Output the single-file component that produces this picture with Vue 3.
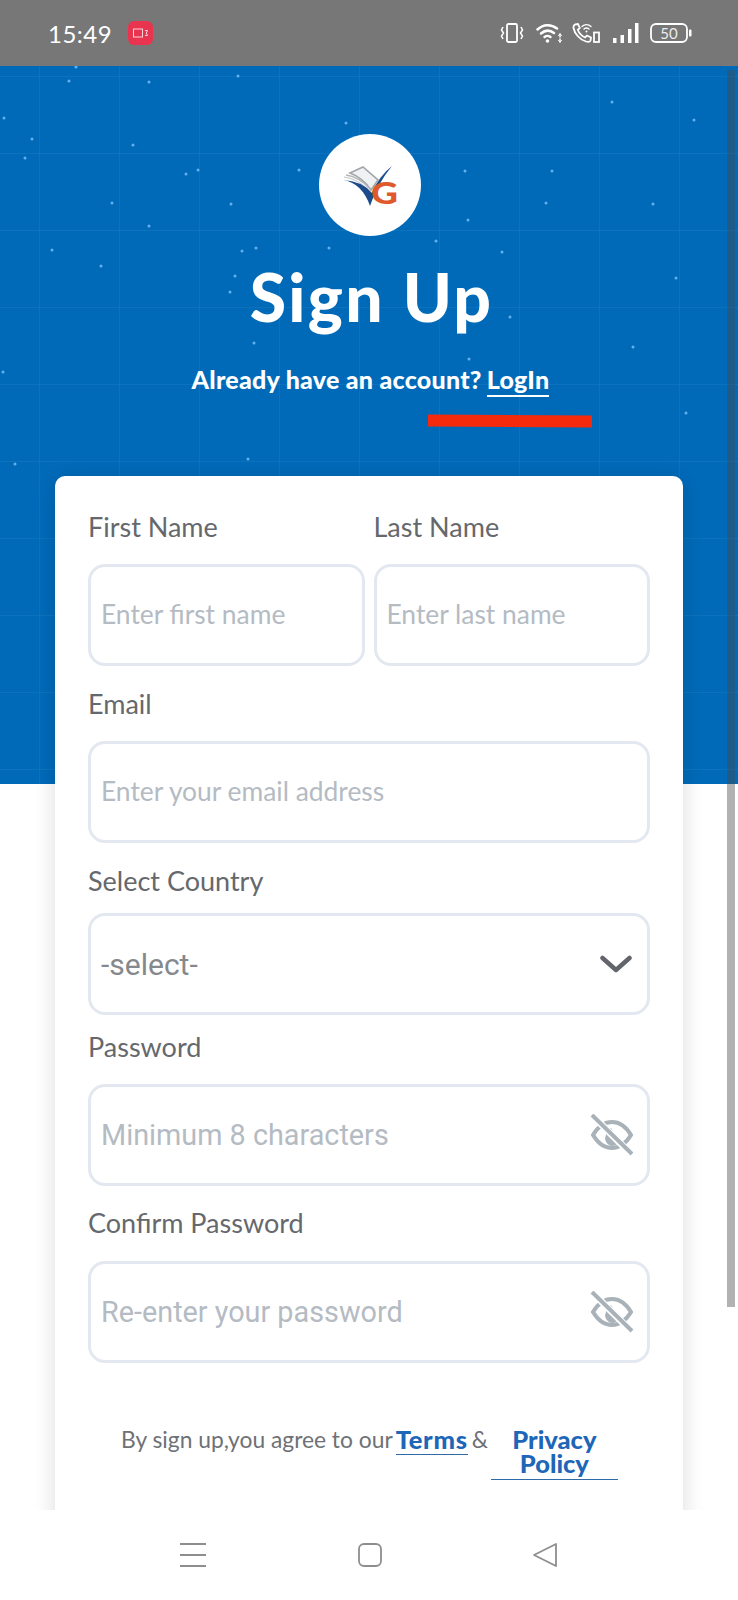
<template>
  <div class="phone">
    <div class="status-bar">
      <div class="status-left">
        <span class="time">15:49</span>
        <span class="rec">
          <svg width="16" height="10" viewBox="0 0 16 10" fill="none" stroke="#fff" stroke-width="1" opacity="0.8">
            <rect x="0.5" y="1" width="9" height="8" />
            <path d="M12 2.500h2.500l-1.200 2.500 1.200 2.500H12" />
          </svg>
        </span>
      </div>
      <div class="status-right">
        <svg class="ic-vibrate" width="24" height="20" viewBox="0 0 24 20" fill="none" stroke="#fff">
          <rect x="7" y="1" width="10" height="18" rx="1.500" stroke-width="1.800" />
          <path d="M3 4 1.500 7 3.500 10 1.500 13 3 16M21 4l1.500 3-2 3 2 3-1.500 3" stroke-width="1.500" />
        </svg>
        <svg class="ic-wifi" width="27" height="20" viewBox="0 0 27 20" fill="none" stroke="#fff" stroke-linecap="round">
          <path d="M1.500 6.500C7.500 1 15 1 21 5.500" stroke-width="2.500" />
          <path d="M5 10.500C9 7 14 7 18 10" stroke-width="2.500" />
          <path d="M8.500 14C10.500 12.500 12.500 12.500 14.500 14" stroke-width="2.300" />
          <circle cx="11.500" cy="18" r="1.800" fill="#fff" stroke="none" />
          <path d="M24 11v3M24 16v3" stroke-width="1.500" />
          <path d="M22.500 12.500 24 10.800l1.500 1.700M22.500 17.500 24 19.200l1.500-1.700" stroke-width="1" />
        </svg>
        <svg class="ic-call" width="29" height="20" viewBox="0 0 29 20" fill="none" stroke="#fff" stroke-linecap="round">
          <path d="M3 1.500 6 1 7.800 5 5.800 6.800C7 10 9.500 13 13 14.500L15 12.500 19 14.500 18.500 17.500C18 19 16 19 14 18.500 8 17 2.500 10.500 1.500 5 1.300 3.500 1.800 2 3 1.500Z" stroke-width="1.800" />
          <path d="M10 3.500C12.500 1 16.500 1 19 3.500M12 6C13.500 4.800 15.500 4.800 17 6" stroke-width="1.400" />
          <circle cx="14.500" cy="8.500" r="1" fill="#fff" stroke="none" />
          <rect x="22" y="9.500" width="5" height="9.500" stroke-width="1.800" stroke-linecap="butt" />
        </svg>
        <svg class="ic-signal" width="26" height="20" viewBox="0 0 26 20" fill="#fff">
          <rect x="0" y="15" width="3.500" height="5" />
          <rect x="7.500" y="12" width="3.500" height="8" />
          <rect x="15" y="6" width="3.500" height="14" />
          <rect x="22" y="0" width="3.500" height="20" />
        </svg>
        <svg class="ic-battery" width="42" height="20" viewBox="0 0 42 20" fill="none">
          <rect x="1" y="1" width="36" height="18" rx="5" stroke="#fff" stroke-width="1.800" />
          <rect x="39" y="6.500" width="2.500" height="7" rx="1" fill="#fff" />
          <text x="19" y="15.500" text-anchor="middle" class="battery-text">50</text>
        </svg>
      </div>
    </div>

    <div class="screen">
      <div class="hero">
        <svg class="stars" width="738" height="718" viewBox="0 0 738 718">
          <circle v-for="(s, i) in stars" :key="i" :cx="s[0]" :cy="s[1] - 66" r="1.500" fill="#63b0ee" />
        </svg>
        <div class="logo">
          <svg width="102" height="102" viewBox="0 0 102 102">
            <path d="M31 39 44 33 59 46 52 56Q44 44 31 39Z" fill="#f0f1f2" stroke="#a2a5a9" stroke-width="1.600" />
            <path d="M27 41Q40 43 50 54" fill="none" stroke="#b4b7ba" stroke-width="1.400" />
            <path d="M25 43Q39 45 49 56" fill="none" stroke="#c4c7ca" stroke-width="1.200" />
            <path d="M24 46Q43 49 51 72 58 50 73 32 60 42 53 59 43 47 24 46Z" fill="#1c4c8c" />
            <text x="52" y="70" class="logo-g" textLength="27" lengthAdjust="spacingAndGlyphs">G</text>
          </svg>
        </div>
        <h1 class="title">Sign Up</h1>
        <p class="subtitle">Already have an account?<a class="login">LogIn</a></p>
      </div>

      <div class="card">
        <div class="name-row">
          <div class="name-col">
            <label class="label">First Name</label>
            <input class="field" placeholder="Enter first name" />
          </div>
          <div class="name-col">
            <label class="label">Last Name</label>
            <input class="field" placeholder="Enter last name" />
          </div>
        </div>

        <label class="label email-label">Email</label>
        <input class="field" placeholder="Enter your email address" />

        <label class="label country-label">Select Country</label>
        <div class="field-wrap">
          <select class="field select">
            <option>-select-</option>
          </select>
          <svg class="chevron" width="32" height="18" viewBox="0 0 32 18" fill="none" stroke="#62666a" stroke-width="4.500" stroke-linecap="round" stroke-linejoin="round">
            <path d="M2.500 3 16 15 29.500 3" />
          </svg>
        </div>

        <label class="label password-label">Password</label>
        <div class="field-wrap">
          <input class="field roboto" type="password" placeholder="Minimum 8 characters" />
          <svg class="eye" width="44" height="42" viewBox="0 0 44 42" fill="none" stroke="#a9b2b8" stroke-width="4">
            <path d="M3 21C9 11 15 8 22 8S35 11 41 21C35 31 29 34 22 34S9 31 3 21Z" />
            <path d="M16 21A7 7 0 0 1 21 14L29 28A7 7 0 0 1 16 21Z" fill="#a9b2b8" stroke="none" />
            <path d="M3 2 41 40" stroke="#fff" stroke-width="7" />
            <path d="M2 1 42 40" />
          </svg>
        </div>

        <label class="label confirm-label">Confirm Password</label>
        <div class="field-wrap">
          <input class="field roboto" type="password" placeholder="Re-enter your password" />
          <svg class="eye" width="44" height="42" viewBox="0 0 44 42" fill="none" stroke="#a9b2b8" stroke-width="4">
            <path d="M3 21C9 11 15 8 22 8S35 11 41 21C35 31 29 34 22 34S9 31 3 21Z" />
            <path d="M16 21A7 7 0 0 1 21 14L29 28A7 7 0 0 1 16 21Z" fill="#a9b2b8" stroke="none" />
            <path d="M3 2 41 40" stroke="#fff" stroke-width="7" />
            <path d="M2 1 42 40" />
          </svg>
        </div>

        <div class="terms">
          <span class="terms-text">By sign up,you agree to our</span>
          <a class="terms-link">Terms</a>
          <span class="terms-amp">&amp;</span>
          <a class="privacy-link">Privacy Policy</a>
        </div>
      </div>

      <div class="red-mark"></div>
      <div class="scrollbar"></div>
    </div>

    <div class="nav-bar">
      <svg width="28" height="26" viewBox="0 0 28 26" fill="none" stroke="#8e8e8e" stroke-width="1.800">
        <path d="M1 2h26M1 13h26M1 24h26" />
      </svg>
      <svg width="26" height="26" viewBox="0 0 26 26" fill="none" stroke="#8e8e8e" stroke-width="1.800">
        <rect x="2" y="2" width="22" height="22" rx="5" />
      </svg>
      <svg width="26" height="26" viewBox="0 0 26 26" fill="none" stroke="#8e8e8e" stroke-width="1.800" stroke-linejoin="round">
        <path d="M24 2V24L2 13Z" />
      </svg>
    </div>
  </div>
</template>

<script setup>
const stars = [
  [76, 67], [69, 81], [149, 82], [238, 76], [4, 118], [32, 139], [25, 158], [133, 145],
  [186, 174], [198, 170], [231, 204], [112, 203], [149, 226], [52, 250], [101, 266],
  [235, 276], [230, 292], [346, 123], [299, 170], [465, 171], [552, 171], [546, 203],
  [468, 220], [242, 251], [256, 248], [329, 248], [436, 241], [502, 252], [510, 317],
  [254, 343], [469, 359], [612, 102], [694, 120], [653, 204], [676, 278], [686, 413],
  [15, 464], [3, 372], [633, 347], [248, 459],
]
</script>

<style>
html,
body {
  margin: 0;
  background: #fff;
}
</style>

<style scoped>
.phone {
  width: 738px;
  height: 1600px;
  display: flex;
  flex-direction: column;
  overflow: hidden;
  font-family: Lato, "Liberation Sans", sans-serif;
}

.status-bar {
  height: 66px;
  flex: none;
  background: #777;
  display: flex;
  align-items: center;
  justify-content: space-between;
  padding: 0 46px 0 48px;
  color: #fff;
}

.status-left {
  display: flex;
  align-items: center;
  gap: 16px;
}

.time {
  font-size: 24px;
  letter-spacing: 0.5px;
}

.rec {
  width: 25px;
  height: 24px;
  border-radius: 6px;
  background: #e8344f;
  display: flex;
  align-items: center;
  justify-content: center;
}

.status-right {
  display: flex;
  align-items: center;
}

.ic-vibrate { margin-right: 12px; }
.ic-wifi { margin-right: 9px; }
.ic-call { margin-right: 12px; }
.ic-signal { margin-right: 11px; }

.battery-text {
  font-family: Lato, sans-serif;
  font-size: 15px;
  fill: #ececec;
}

.screen {
  position: relative;
  flex: 1;
  min-height: 0;
  overflow: hidden;
  background: #fff;
}

.hero {
  position: relative;
  height: 718px;
  box-sizing: border-box;
  padding-top: 68px;
  display: flex;
  flex-direction: column;
  align-items: center;
  background-color: #006ab9;
  background-image:
    linear-gradient(rgba(255, 255, 255, 0.05) 1px, transparent 1px),
    linear-gradient(90deg, rgba(255, 255, 255, 0.05) 1px, transparent 1px);
  background-size: 80px 77px;
  background-position: 39px 10px;
}

.stars {
  position: absolute;
  left: 0;
  top: 0;
}

.logo {
  position: relative;
  width: 102px;
  height: 102px;
  margin-left: 2px;
  border-radius: 50%;
  background: #fff;
}

.logo-g {
  font-family: Lato, sans-serif;
  font-size: 30px;
  font-weight: 900;
  fill: #e0592a;
}

.title {
  position: relative;
  margin: 21px 0 0 5px;
  font-size: 66px;
  line-height: 80px;
  font-weight: 900;
  letter-spacing: 2.300px;
  color: #fff;
}

.subtitle {
  position: relative;
  margin: 24px 0 0 3px;
  font-size: 25px;
  line-height: 36px;
  font-weight: 900;
  letter-spacing: 0.250px;
  color: #fff;
  white-space: nowrap;
}

.login {
  display: inline-block;
  margin-left: 5px;
  line-height: 31px;
  border-bottom: 2px solid #fff;
}

.card {
  position: relative;
  box-sizing: border-box;
  width: 628px;
  margin: -308px 0 0 55px;
  padding: 33px 33px 60px;
  background: #fff;
  border-radius: 10px;
  box-shadow: 0 4px 22px rgba(0, 0, 0, 0.14);
}

.name-row {
  display: flex;
  gap: 9px;
}

.name-col {
  flex: 1;
  min-width: 0;
}

.label {
  display: block;
  height: 36px;
  line-height: 36px;
  margin-bottom: 19px;
  font-size: 27px;
  color: #65686c;
}

.email-label { margin-top: 20px; }

.country-label {
  margin-top: 20px;
  margin-bottom: 14px;
}

.password-label { margin-top: 14px; }

.confirm-label {
  margin-top: 19px;
  margin-bottom: 20px;
}

.field-wrap {
  position: relative;
}

.field {
  display: block;
  box-sizing: border-box;
  width: 100%;
  height: 102px;
  padding: 0 60px 3px 10px;
  border: 3px solid #e3e8f0;
  border-radius: 17px;
  background: #fff;
  outline: none;
  font-family: Lato, sans-serif;
  font-size: 26.400px;
  color: #85898e;
}

.field::placeholder {
  color: #b4bbc3;
  opacity: 1;
}

.name-col .field {
  padding-right: 8px;
}

.roboto {
  font-family: Roboto, sans-serif;
  font-size: 28.800px;
  padding-bottom: 0;
}

.select {
  appearance: none;
  font-family: Roboto, sans-serif;
  font-size: 30px;
  padding-bottom: 0;
}

.chevron {
  position: absolute;
  right: 18px;
  top: 42px;
  pointer-events: none;
}

.eye {
  position: absolute;
  right: 16px;
  top: 30px;
}

.terms {
  margin-top: 64px;
  display: flex;
  align-items: flex-start;
  font-size: 22.800px;
  line-height: 24px;
  color: #6e7175;
  white-space: nowrap;
  padding-left: 33px;
}

.terms-link {
  margin-left: 3px;
  height: 24px;
  padding-bottom: 3px;
  border-bottom: 1.500px solid #2f6ba8;
  color: #1e66b8;
  font-size: 25.500px;
  font-weight: 900;
  letter-spacing: 0.700px;
}

.terms-amp {
  margin-left: 4px;
}

.privacy-link {
  width: 127px;
  margin-left: 3px;
  padding-bottom: 4px;
  border-bottom: 1.500px solid #2f6ba8;
  color: #1e66b8;
  font-size: 25.500px;
  font-weight: 900;
  text-align: center;
  white-space: normal;
}

.red-mark {
  position: absolute;
  left: 428px;
  top: 349px;
  width: 164px;
  height: 12px;
  background: #f52a0c;
  transform: rotate(0.4deg);
}

.scrollbar {
  position: absolute;
  left: 727px;
  top: 4px;
  width: 8px;
  height: 1237px;
  background: rgba(72, 72, 72, 0.42);
}

.nav-bar {
  height: 90px;
  flex: none;
  background: #fff;
  display: flex;
  align-items: flex-start;
  padding-top: 32px;
  box-sizing: border-box;
  gap: 149.500px;
  padding-left: 179px;
}
</style>
